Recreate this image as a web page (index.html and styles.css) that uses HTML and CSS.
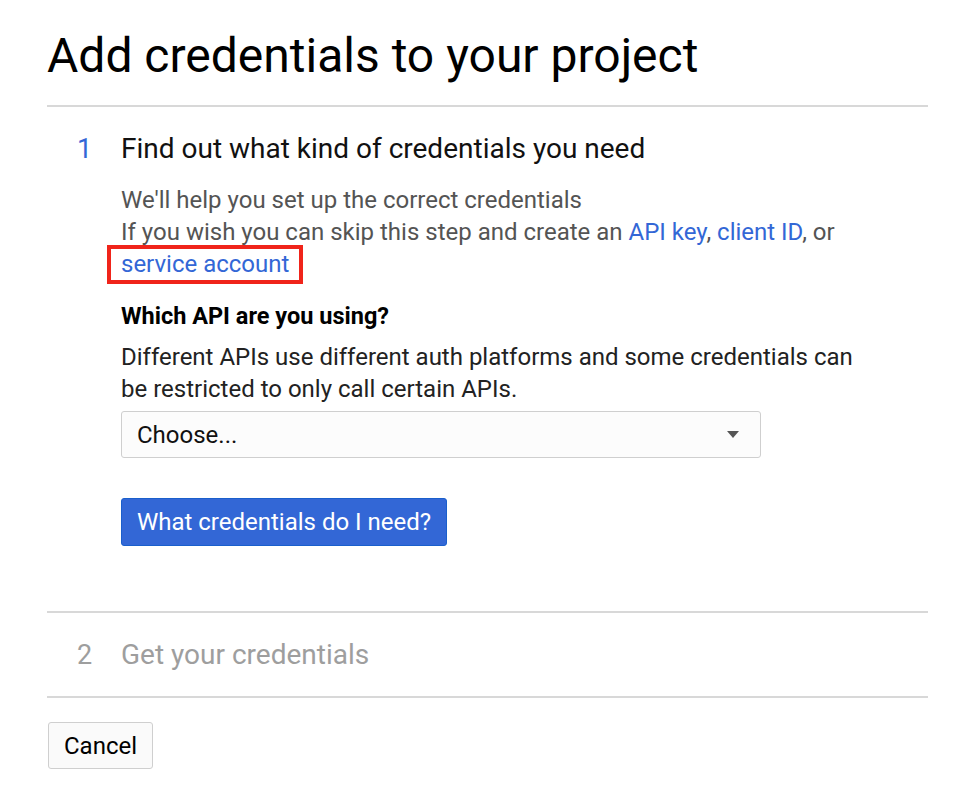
FILE: index.html
```html
<!DOCTYPE html>
<html>
<head>
<meta charset="utf-8">
<link rel="stylesheet" href="styles.css">
</head>
<body>
<div class="page">
  <h1 class="title">Add credentials to your project</h1>
  <div class="step step-active">
    <div class="step-head">
      <span class="step-num">1</span>
      <span class="step-title">Find out what kind of credentials you need</span>
    </div>
    <div class="step-body">
      <p class="intro">We'll help you set up the correct credentials<br>If you wish you can skip this step and create an <a class="link">API key</a>, <a class="link">client ID</a>, or<br><a class="link boxed">service account</a></p>
      <h3 class="q">Which API are you using?</h3>
      <p class="desc">Different APIs use different auth platforms and some credentials can be restricted to only call certain APIs.</p>
      <div class="select"><span>Choose...</span><span class="caret"></span></div>
      <button class="primary">What credentials do I need?</button>
    </div>
  </div>
  <div class="step step-inactive">
    <div class="step-head">
      <span class="step-num">2</span>
      <span class="step-title">Get your credentials</span>
    </div>
  </div>
  <button class="cancel">Cancel</button>
</div>
</body>
</html>
```
FILE: styles.css
```css
html, body { margin: 0; padding: 0; background: #fff; }
body { font-family: Roboto, "Noto Sans", sans-serif; color: #000; }
.page { width: 881px; padding-left: 47px; padding-top: 21px; }
.title { font-size: 48px; font-weight: 400; margin: 0; line-height: 70px; height: 84px; border-bottom: 2px solid #d8d8d8; color: #000; }
.step { border-bottom: 2px solid #d8d8d8; }
.step-head { display: flex; align-items: center; height: 83px; }
.step-num { width: 74px; padding-left: 30px; box-sizing: border-box; font-size: 27px; color: #3367d6; }
.step-title { font-size: 28px; color: #111; }
.step-inactive .step-num, .step-inactive .step-title { color: #9e9e9e; }
.step-body { padding-left: 74px; padding-bottom: 65px; }
.intro { margin: 0; font-size: 24px; line-height: 32px; color: #545454; margin-top: -6px; }
.link { color: #3367d6; text-decoration: none; }
.boxed { display: inline-block; border: 4px solid #f0241a; padding: 2px 10px 3px; margin: -4px -14px; line-height: 26px; }
.q { font-size: 23.5px; font-weight: 700; margin: 20px 0 0; line-height: 32px; color: #000; }
.desc { margin: 9px 0 0; font-size: 24px; line-height: 32px; color: #222; width: 740px; }
.select { display: flex; justify-content: space-between; align-items: center; width: 640px; height: 47px; box-sizing: border-box; border: 1px solid #cfcfcf; border-radius: 3px; background: #fcfcfc; padding: 0 21px 0 15px; margin-top: 6px; font-size: 24px; color: #111; }
.caret { width: 0; height: 0; border-left: 6px solid transparent; border-right: 6px solid transparent; border-top: 7px solid #555; }
.primary { display: block; margin-top: 40px; height: 48px; width: 326px; background: #3367d6; border: 1px solid #1a5fcc; border-radius: 3px; color: #fff; font-family: Roboto, sans-serif; font-size: 24px; padding: 0; }
.cancel { margin-top: 24px; margin-left: 1px; width: 105px; height: 47px; background: #fafafa; border: 1px solid #cfcfcf; border-radius: 3px; font-family: Roboto, sans-serif; font-size: 24px; color: #000; padding: 0; }
```
